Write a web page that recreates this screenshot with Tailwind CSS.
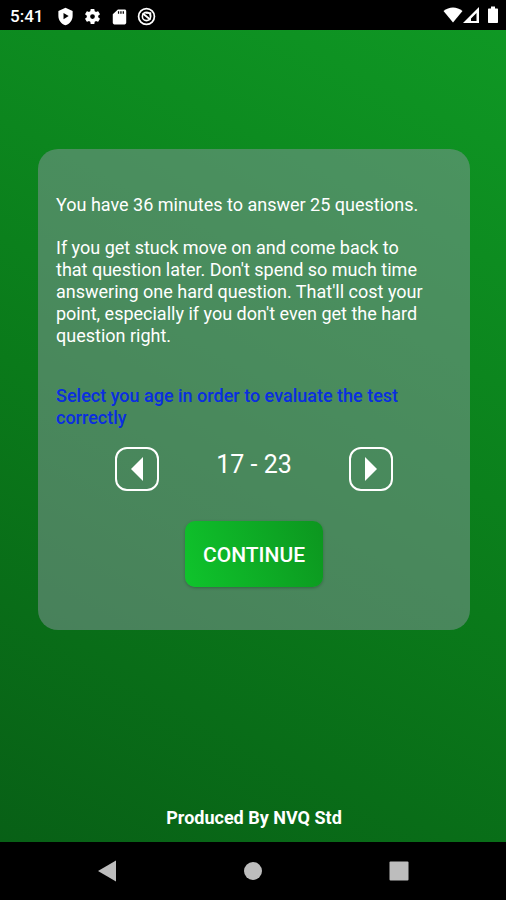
<!DOCTYPE html>
<html lang="en">
<head>
<meta charset="utf-8">
<meta name="viewport" content="width=device-width, initial-scale=1">
<title>Test instructions</title>
<script src="https://cdn.jsdelivr.net/npm/@tailwindcss/browser@4"></script>
</head>
<body class="flex min-h-screen flex-col bg-black font-['Roboto',sans-serif] text-white">
  <!-- Status bar -->
  <header class="flex h-[30px] shrink-0 items-center bg-black pl-[10px] pr-[7px]">
    <span class="pt-[2px] text-[17px] font-medium leading-[22px]">5:41</span>
    <div class="ml-[13px] flex items-center gap-[8px] pt-[2px]">
      <svg class="size-[19px]" viewBox="0 0 24 24" aria-hidden="true"><path fill="#fff" fill-rule="evenodd" d="M12 1 3 5v6c0 5.6 3.8 10.700 9 12 5.200-1.300 9-6.400 9-12V5zM9.500 7.500v8l6.500-4z"/></svg>
      <svg class="size-[19px]" viewBox="0 0 24 24" aria-hidden="true"><path fill="#fff" d="M19.140 12.940c.04-.3.06-.61.06-.94 0-.32-.02-.64-.07-.94l2.030-1.580a.49.49 0 0 0 .12-.61l-1.920-3.320a.49.49 0 0 0-.59-.22l-2.390.96c-.5-.38-1.030-.7-1.620-.94l-.36-2.540a.48.48 0 0 0-.48-.41h-3.840a.48.48 0 0 0-.47.41l-.36 2.540c-.59.24-1.130.57-1.620.94l-2.390-.96a.48.48 0 0 0-.59.22L2.740 8.870a.48.48 0 0 0 .12.610l2.030 1.580c-.05.3-.09.63-.09.94s.02.64.07.94l-2.030 1.580a.49.49 0 0 0-.12.610l1.920 3.320c.12.22.37.29.59.22l2.390-.96c.5.38 1.030.7 1.620.94l.36 2.540c.05.24.24.41.48.41h3.840c.24 0 .44-.17.47-.41l.36-2.540c.59-.24 1.130-.56 1.620-.94l2.390.96c.22.08.47 0 .59-.22l1.920-3.320a.48.48 0 0 0-.12-.61zM12 15a3 3 0 1 1 0-6 3 3 0 0 1 0 6z"/></svg>
      <svg class="size-[19px]" viewBox="0 0 24 24" aria-hidden="true"><path fill="#fff" fill-rule="evenodd" d="M18.500 3H10L3.500 9v11c0 1.100.9 2 2 2h13c1.100 0 2-.9 2-2V5c0-1.100-.9-2-2-2zM10 5.500h1.600v3H10zM13 5.500h1.600v3H13zM16 5.500h1.600v3H16z"/></svg>
      <svg class="size-[19px]" viewBox="0 0 24 24" fill="none" stroke="#fff" aria-hidden="true"><circle cx="12" cy="12" r="10" stroke-width="2.200"/><circle cx="12" cy="12" r="5.200" stroke-width="2"/><path d="m7 8 10 8" stroke-width="2.400"/><path d="M11 7.500h6V12" stroke-width="2"/></svg>
    </div>
    <div class="ml-auto flex items-center">
      <svg class="h-5 w-[20px]" viewBox="0 0 20 20" aria-hidden="true"><path fill="#fff" d="M.5 6C6 1.300 14 1.300 19.500 6L10 17.500z"/></svg>
      <svg class="h-5 w-[17px]" viewBox="0 0 17 20" aria-hidden="true"><path fill="#fff" fill-rule="evenodd" d="M16 2v16H0zM13.500 8 8 13.500V16h5.500z"/></svg>
      <svg class="ml-[7px] h-5 w-[12px]" viewBox="0 0 12 20" aria-hidden="true"><path fill="#fff" d="M4 1.500h4v2h2c.7 0 1 .4 1 1V17c0 .7-.4 1-1 1H2c-.7 0-1-.4-1-1V4.500c0-.7.4-1 1-1h2z"/></svg>
    </div>
  </header>

  <main class="flex grow flex-col bg-[linear-gradient(28deg,#086016,#0a7a1a_45%,#0f9824)] pl-[38px] pr-[36px] pt-[119px]">
    <section class="flex flex-col rounded-[20px] bg-[#88969e]/50 px-[18px] pb-[43px] pt-[45px] text-[18px] leading-[22px]">
      <p>You have 36 minutes to answer 25 questions.</p>
      <p class="mt-[21px]">If you get stuck move on and come back to<br>that question later. Don't spend so much time<br>answering one hard question. That'll cost your<br>point, especially if you don't even get the hard<br>question right.</p>
      <p id="age-label" class="mt-[38px] font-medium text-[#0a2ee0]">Select you age in order to evaluate the test<br>correctly</p>
      <div role="group" aria-labelledby="age-label" class="mt-[18px] flex items-center justify-between px-[59px]">
        <button type="button" aria-label="Previous age range" class="flex size-11 items-center justify-center rounded-[12px] border-2 border-white">
          <svg class="h-[24px] w-[12px]" viewBox="0 0 12 24" aria-hidden="true"><path fill="#fff" d="M12 0v24L0 12z"/></svg>
        </button>
        <output class="pb-[8px] text-[25px] leading-[28px]">17 - 23</output>
        <button type="button" aria-label="Next age range" class="flex size-11 items-center justify-center rounded-[12px] border-2 border-white">
          <svg class="h-[24px] w-[12px]" viewBox="0 0 12 24" aria-hidden="true"><path fill="#fff" d="M0 0v24l12-12z"/></svg>
        </button>
      </div>
      <button type="button" class="mt-[30px] self-center rounded-[10px] bg-[linear-gradient(70deg,#0fc42c,#0c961f)] px-[18px] pb-[21px] pt-[23px] text-[21px] font-medium leading-[22px] shadow-[0_1px_3px_rgba(0,0,0,0.25)]">CONTINUE</button>
    </section>
    <footer class="mt-auto pb-[13px] text-center text-[18px] font-bold leading-[22px]">Produced By NVQ Std</footer>
  </main>

  <!-- System navigation -->
  <nav aria-label="System" class="flex h-[58px] shrink-0 items-center justify-center gap-[122px] bg-black">
    <button type="button" aria-label="Back" class="flex size-6 items-center justify-center"><svg class="size-6" viewBox="0 0 24 24" aria-hidden="true"><path fill="#bdbdbd" d="M21 1.500v21L3 12z"/></svg></button>
    <button type="button" aria-label="Home" class="flex size-6 items-center justify-center"><svg class="size-6" viewBox="0 0 24 24" aria-hidden="true"><circle cx="12" cy="12" r="9" fill="#bdbdbd"/></svg></button>
    <button type="button" aria-label="Recent apps" class="flex size-6 items-center justify-center"><svg class="size-6" viewBox="0 0 24 24" aria-hidden="true"><rect x="2.500" y="2.500" width="19" height="19" rx="1" fill="#bdbdbd"/></svg></button>
  </nav>
</body>
</html>
